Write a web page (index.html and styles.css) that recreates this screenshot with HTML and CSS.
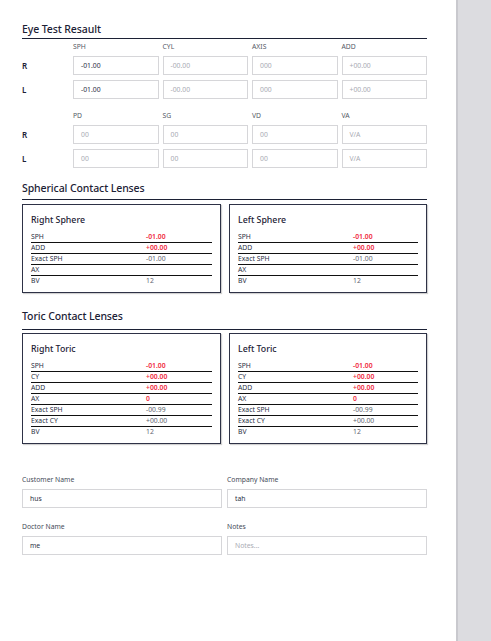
FILE: index.html
```html
<!DOCTYPE html>
<html>
<head>
<meta charset="utf-8">
<link rel="stylesheet" href="styles.css">
</head>
<body>
<div class="page">
  <main class="content">
    <h2 class="section-title first">Eye Test Resault</h2>
    <div class="eye-grid">
      <span></span><span class="col-head">SPH</span><span class="col-head">CYL</span><span class="col-head">AXIS</span><span class="col-head">ADD</span>
      <span class="row-label">R</span><div class="field val">-01.00</div><div class="field ph">-00.00</div><div class="field ph">000</div><div class="field ph">+00.00</div>
      <span class="row-label">L</span><div class="field val">-01.00</div><div class="field ph">-00.00</div><div class="field ph">000</div><div class="field ph">+00.00</div>
    </div>
    <div class="eye-grid second">
      <span></span><span class="col-head">PD</span><span class="col-head">SG</span><span class="col-head">VD</span><span class="col-head">VA</span>
      <span class="row-label">R</span><div class="field ph">00</div><div class="field ph">00</div><div class="field ph">00</div><div class="field ph">V/A</div>
      <span class="row-label">L</span><div class="field ph">00</div><div class="field ph">00</div><div class="field ph">00</div><div class="field ph">V/A</div>
    </div>

    <h2 class="section-title spherical">Spherical Contact Lenses</h2>
    <div class="cards">
      <div class="card">
        <h3 class="card-title">Right Sphere</h3>
        <div class="rows">
          <div class="r"><span>SPH</span><span class="red">-01.00</span></div>
          <div class="r"><span>ADD</span><span class="red">+00.00</span></div>
          <div class="r"><span>Exact SPH</span><span class="muted">-01.00</span></div>
          <div class="r tall"><span>AX</span><span></span></div>
          <div class="r last"><span>BV</span><span class="muted">12</span></div>
        </div>
      </div>
      <div class="card">
        <h3 class="card-title">Left Sphere</h3>
        <div class="rows">
          <div class="r"><span>SPH</span><span class="red">-01.00</span></div>
          <div class="r"><span>ADD</span><span class="red">+00.00</span></div>
          <div class="r"><span>Exact SPH</span><span class="muted">-01.00</span></div>
          <div class="r tall"><span>AX</span><span></span></div>
          <div class="r last"><span>BV</span><span class="muted">12</span></div>
        </div>
      </div>
    </div>

    <h2 class="section-title toric">Toric Contact Lenses</h2>
    <div class="cards toric-cards">
      <div class="card">
        <h3 class="card-title">Right Toric</h3>
        <div class="rows">
          <div class="r"><span>SPH</span><span class="red">-01.00</span></div>
          <div class="r"><span>CY</span><span class="red">+00.00</span></div>
          <div class="r"><span>ADD</span><span class="red">+00.00</span></div>
          <div class="r"><span>AX</span><span class="red">0</span></div>
          <div class="r"><span>Exact SPH</span><span class="muted">-00.99</span></div>
          <div class="r"><span>Exact CY</span><span class="muted">+00.00</span></div>
          <div class="r last"><span>BV</span><span class="muted">12</span></div>
        </div>
      </div>
      <div class="card">
        <h3 class="card-title">Left Toric</h3>
        <div class="rows">
          <div class="r"><span>SPH</span><span class="red">-01.00</span></div>
          <div class="r"><span>CY</span><span class="red">+00.00</span></div>
          <div class="r"><span>ADD</span><span class="red">+00.00</span></div>
          <div class="r"><span>AX</span><span class="red">0</span></div>
          <div class="r"><span>Exact SPH</span><span class="muted">-00.99</span></div>
          <div class="r"><span>Exact CY</span><span class="muted">+00.00</span></div>
          <div class="r last"><span>BV</span><span class="muted">12</span></div>
        </div>
      </div>
    </div>

    <div class="form">
      <div class="fgroup"><label class="flabel">Customer Name</label><div class="finput val">hus</div></div>
      <div class="fgroup"><label class="flabel">Company Name</label><div class="finput val">tah</div></div>
      <div class="fgroup"><label class="flabel">Doctor Name</label><div class="finput val">me</div></div>
      <div class="fgroup"><label class="flabel">Notes</label><div class="finput ph">Notes...</div></div>
    </div>
  </main>
  <aside class="side"></aside>
</div>
</body>
</html>
```
FILE: styles.css
```css
* { box-sizing: border-box; }
html, body { margin: 0; padding: 0; background: #fff; }
body { font-family: "Noto Sans", "Open Sans", sans-serif; color: #1c2135; }
.page { display: flex; min-height: 641px; }
.content { width: 456px; padding: 0 29px 0 22px; }
.side { flex: 1; background: #dcdce0; border-left: 2px solid #c9c9ce; }

.section-title {
  margin: 0; font-size: 10.5px; font-weight: 500; line-height: 14px;
  border-bottom: 1.3px solid #1c2135; letter-spacing: -0.1px;
}
.section-title.first { margin-top: 22px; padding-bottom: 1.5px; }
.section-title.spherical { margin-top: 12.5px; padding-bottom: 4px; }
.section-title.toric { margin-top: 15.7px; padding-bottom: 6px; }

.eye-grid {
  display: grid; grid-template-columns: 47px repeat(4, 1fr);
  column-gap: 4px; row-gap: 5px; margin-top: 3.2px; align-items: center;
}
.eye-grid.second { margin-top: 12.7px; }
.col-head { font-size: 6.8px; color: #555a66; line-height: 9px; }
.row-label { font-size: 8px; font-weight: 600; color: #1c2135; }
.field {
  height: 19px; border: 1px solid #d6d6d9; font-size: 6.8px;
  padding-left: 7px; display: flex; align-items: center;
}
.val { color: #2a2f3f; }
.ph { color: #a9abb3; }

.cards { display: grid; grid-template-columns: 199px 198px; column-gap: 8px; margin-top: 3.7px; }
.cards.toric-cards { margin-top: 2.7px; }
.card {
  border: 1.5px solid #2e3246; box-shadow: 1px 1px 1px rgba(0,0,0,0.18);
  padding: 9px 8px 6px 8px;
}
.card-title { margin: 0 0 6px; font-size: 8.8px; font-weight: 500; line-height: 12px; color: #1c2135; }
.r {
  display: grid; grid-template-columns: 115px 1fr;
  font-size: 6.8px; line-height: 10px; border-bottom: 1.2px solid #111;
  color: #2a2f3f;
}
.r.tall { line-height: 10.6px; }
.r.last { border-bottom: none; }
.red { color: #f0283c; font-weight: 600; }
.muted { color: #61656f; }

.form {
  display: grid; grid-template-columns: 1fr 1fr; column-gap: 5px; row-gap: 14px;
  margin-top: 31px;
}
.flabel { display: block; font-size: 6.8px; line-height: 9px; color: #444a57; margin-bottom: 5px; }
.finput {
  height: 19px; border: 1px solid #d6d6d9; font-size: 6.8px;
  padding-left: 7px; display: flex; align-items: center;
}
```
